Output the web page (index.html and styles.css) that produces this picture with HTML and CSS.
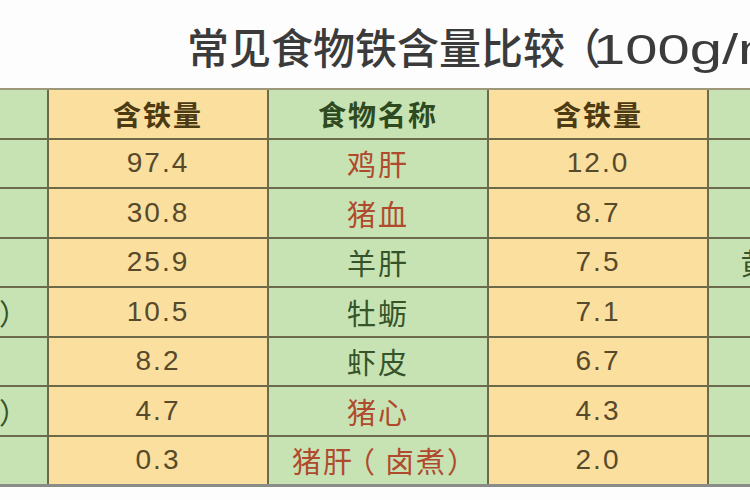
FILE: index.html
```html
<!DOCTYPE html>
<html lang="zh-CN">
<head>
<meta charset="utf-8">
<title>常见食物铁含量比较</title>
<link rel="stylesheet" href="styles.css">
</head>
<body>
<div class="page">
  <h1 class="title">常见食物铁含量比较<span class="tparen">（</span><span class="unit">100g/mg）</span></h1>
  <div class="table">
    <div class="cell green head name">食物名称</div>
    <div class="cell yellow head amount">含铁量</div>
    <div class="cell green head name">食物名称</div>
    <div class="cell yellow head amount">含铁量</div>
    <div class="cell green head name">食物名称</div>

    <div class="cell green food dark">黑木耳</div>
    <div class="cell yellow num">97.4</div>
    <div class="cell green food red">鸡肝</div>
    <div class="cell yellow num">12.0</div>
    <div class="cell green food dark">菠菜</div>

    <div class="cell green food dark">紫菜</div>
    <div class="cell yellow num">30.8</div>
    <div class="cell green food red">猪血</div>
    <div class="cell yellow num">8.7</div>
    <div class="cell green food dark">芹菜</div>

    <div class="cell green food dark">芝麻酱</div>
    <div class="cell yellow num">25.9</div>
    <div class="cell green food dark">羊肝</div>
    <div class="cell yellow num">7.5</div>
    <div class="cell green food dark"><span class="label">黄豆（干）</span></div>

    <div class="cell green food dark"><span class="label">豆腐皮（干<span class="edge">）</span></span></div>
    <div class="cell yellow num">10.5</div>
    <div class="cell green food dark">牡蛎</div>
    <div class="cell yellow num">7.1</div>
    <div class="cell green food dark">红枣</div>

    <div class="cell green food dark">黄豆</div>
    <div class="cell yellow num">8.2</div>
    <div class="cell green food dark">虾皮</div>
    <div class="cell yellow num">6.7</div>
    <div class="cell green food dark">油菜</div>

    <div class="cell green food dark"><span class="label">小米粥（熟<span class="edge">）</span></span></div>
    <div class="cell yellow num">4.7</div>
    <div class="cell green food red">猪心</div>
    <div class="cell yellow num">4.3</div>
    <div class="cell green food dark">鸡蛋</div>

    <div class="cell green food dark">牛奶</div>
    <div class="cell yellow num">0.3</div>
    <div class="cell green food red"><span class="label">猪肝<span class="lp">（</span>卤煮<span class="rp">）</span></span></div>
    <div class="cell yellow num">2.0</div>
    <div class="cell green food dark">苹果</div>
  </div>
</div>
</body>
</html>
```

FILE: styles.css
```css
html, body {
  margin: 0;
  padding: 0;
  background: #ffffff;
  overflow: hidden;
}

.page {
  width: 750px;
  height: 500px;
  overflow: hidden;
  background: #fdfdfd;
}

.title {
  height: 50px;
  margin: 21px 0 17px 187px;
  font-family: "Noto Sans CJK SC", "Liberation Sans", sans-serif;
  font-size: 42px;
  line-height: 50px;
  font-weight: 500;
  color: #3b3b3b;
  white-space: nowrap;
}

.tparen {
  margin: 0 -8px 0 -6px;
}

.unit {
  display: inline-block;
  line-height: 1;
  font-family: "Liberation Sans", "Noto Sans CJK SC", sans-serif;
  font-weight: 400;
  letter-spacing: 0;
  transform: scaleX(1.38);
  transform-origin: left center;
}

.table {
  display: grid;
  grid-template-columns: repeat(5, 218px);
  grid-auto-rows: 47.5px;
  gap: 2px;
  margin-left: -171px;
  width: 1098px;
  background: #6c6a4b;
  border-top: 2px solid #9d9879;
  border-bottom: 3px solid #8a8c88;
}

.cell {
  display: flex;
  align-items: center;
  justify-content: center;
  white-space: nowrap;
  font-family: "Liberation Sans", "Noto Sans CJK SC", sans-serif;
}

.green {
  background: #c8e3b3;
}

.yellow {
  background: #fbdf9f;
}

.head {
  font-family: "Noto Sans CJK SC", sans-serif;
  font-size: 28px;
  font-weight: 700;
  letter-spacing: 2px;
}

.head.amount {
  color: #4c3a12;
}

.head.name {
  color: #2e4a21;
}

.num {
  font-size: 28px;
  letter-spacing: 2px;
  color: #574a2b;
}

.food {
  font-family: "Noto Sans CJK SC", sans-serif;
  font-size: 29px;
  letter-spacing: 2px;
}

.label {
  white-space: nowrap;
}

.lp {
  margin: 0 8px 0 -8px;
}

.rp {
  margin-right: -14px;
}

.edge {
  margin-right: 2px;
}

.food.red {
  color: #b04a2e;
}

.food.dark {
  color: #35542a;
}
```
